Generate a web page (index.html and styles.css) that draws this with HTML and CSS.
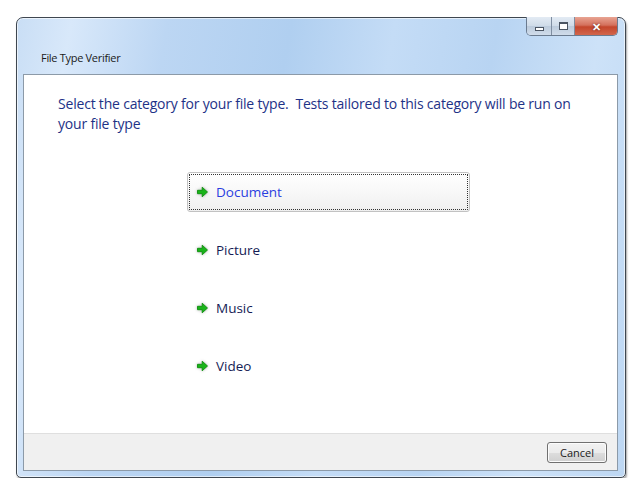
FILE: index.html
```html
<!DOCTYPE html>
<html lang="en">
<head>
    <meta charset="UTF-8">
    <title>File Type Verifier</title>
    <link rel="stylesheet" href="styles.css">
</head>
<body>

    <div class="window">
        <div class="titlebar">
            <span class="title">File Type Verifier</span>
            <div class="caption-buttons">
                <span class="cap cap-min"><i></i></span>
                <span class="cap cap-max"><i></i></span>
                <span class="cap cap-close">&#x2715;</span>
            </div>
        </div>

        <div class="client">
            <div class="content">
                <p class="instruction">Select the category for your file type.&nbsp; Tests tailored to this category will be run on your file type</p>

                <div class="choices">
                    <div class="choice focused">
                        <svg class="arrow" width="13" height="12" viewBox="0 0 13 12"><path d="M1.5 4.3h4.7V1.2L11.5 6l-5.3 4.8V7.7H1.5z" fill="#19b419" stroke="#0d8f0d" stroke-width="0.9" stroke-linejoin="round"/></svg>
                        <span>Document</span>
                    </div>
                    <div class="choice">
                        <svg class="arrow" width="13" height="12" viewBox="0 0 13 12"><path d="M1.5 4.3h4.7V1.2L11.5 6l-5.3 4.8V7.7H1.5z" fill="#19b419" stroke="#0d8f0d" stroke-width="0.9" stroke-linejoin="round"/></svg>
                        <span>Picture</span>
                    </div>
                    <div class="choice">
                        <svg class="arrow" width="13" height="12" viewBox="0 0 13 12"><path d="M1.5 4.3h4.7V1.2L11.5 6l-5.3 4.8V7.7H1.5z" fill="#19b419" stroke="#0d8f0d" stroke-width="0.9" stroke-linejoin="round"/></svg>
                        <span>Music</span>
                    </div>
                    <div class="choice">
                        <svg class="arrow" width="13" height="12" viewBox="0 0 13 12"><path d="M1.5 4.3h4.7V1.2L11.5 6l-5.3 4.8V7.7H1.5z" fill="#19b419" stroke="#0d8f0d" stroke-width="0.9" stroke-linejoin="round"/></svg>
                        <span>Video</span>
                    </div>
                </div>
            </div>

            <div class="footer">
                <button class="btn">Cancel</button>
            </div>
        </div>
    </div>

</body>
</html>
```

FILE: styles.css
```css
* {
    margin: 0;
    padding: 0;
    box-sizing: border-box;
}

body {
    font-family: 'Open Sans', 'Noto Sans', sans-serif;
    background-color: #ffffff;
    padding: 17px 0 0 16px;
}

.window {
    width: 610px;
    height: 461px;
    border: 1px solid #3f4750;
    border-radius: 7px 7px 5px 5px;
    background: linear-gradient(100deg, #c9def5 0%, #d8e8fa 8%, #bcd6f3 22%, #b0cff0 40%, #c4dcf6 55%, #b8d4f2 70%, #cde2f8 85%, #bdd7f3 100%);
    box-shadow: 1px 2px 2px rgba(0, 0, 0, 0.35), inset 0 0 0 1px rgba(255, 255, 255, 0.6);
    padding: 0 7px 6px 6px;
    display: flex;
    flex-direction: column;
}

.titlebar {
    height: 56px;
    display: flex;
    justify-content: space-between;
    align-items: flex-start;
}

.title {
    font-size: 11px;
    color: #1a1a1a;
    align-self: flex-end;
    margin: 0 0 9px 18px;
    letter-spacing: -0.3px;
}

.caption-buttons {
    display: flex;
    margin-top: -1px;
    border: 1px solid #6b7b8f;
    border-top: none;
    border-radius: 0 0 5px 5px;
    overflow: hidden;
    height: 19px;
}

.cap {
    height: 18px;
    display: flex;
    align-items: center;
    justify-content: center;
    background: linear-gradient(#e3ebf4, #cfdbe8 50%, #bccbdc 51%, #d0dcea);
}

.cap-min {
    width: 25px;
    border-right: 1px solid #7f8ea1;
}

.cap-min i {
    width: 9px;
    height: 4px;
    border: 1px solid #4b5563;
    background: #ffffff;
    margin-top: 5px;
}

.cap-max {
    width: 23px;
    border-right: 1px solid #7f8ea1;
}

.cap-max i {
    width: 9px;
    height: 8px;
    border: 1px solid #4b5563;
    border-top-width: 2px;
    background: #ffffff;
}

.cap-close {
    width: 42px;
    color: #ffffff;
    font-size: 11px;
    font-weight: bold;
    background: linear-gradient(#e8a493, #d4715d 45%, #c4462c 55%, #d2664c);
    text-shadow: 0 0 2px #5a1a10;
}

.client {
    flex: 1;
    background-color: #ffffff;
    border: 1px solid #8c9aa8;
    display: flex;
    flex-direction: column;
}

.content {
    flex: 1;
    padding: 19px 20px 0 34px;
}

.instruction {
    font-size: 14px;
    letter-spacing: -0.2px;
    line-height: 20px;
    color: #1e3287;
}

.choices {
    display: flex;
    flex-direction: column;
    gap: 18px;
    margin: 38px 0 0 129px;
}

.choice {
    width: 283px;
    height: 40px;
    display: flex;
    align-items: center;
    gap: 7px;
    padding-left: 8px;
    font-size: 13.5px;
    color: #151c55;
    border: 1px solid transparent;
    border-radius: 3px;
}

.choice.focused {
    color: #2a3ee0;
    border-color: #c2c2c2;
    background: linear-gradient(#ffffff, #f8f8f8 50%, #efefef);
    outline: 1px dotted #333;
    outline-offset: -3px;
}

.arrow {
    filter: drop-shadow(0 0 1.5px rgba(0, 0, 0, 0.3));
}

.footer {
    height: 37px;
    background-color: #f0f0f0;
    border-top: 1px solid #dfdfdf;
    display: flex;
    justify-content: flex-end;
    align-items: center;
    padding-right: 10px;
}

.btn {
    width: 60px;
    height: 21px;
    font-family: inherit;
    font-size: 11px;
    color: #1a1a1a;
    border: 1px solid #707070;
    border-radius: 3px;
    background: linear-gradient(#f2f2f2, #ebebeb 50%, #dddddd 51%, #cfcfcf);
    box-shadow: inset 0 0 0 1px #fcfcfc;
}
```
